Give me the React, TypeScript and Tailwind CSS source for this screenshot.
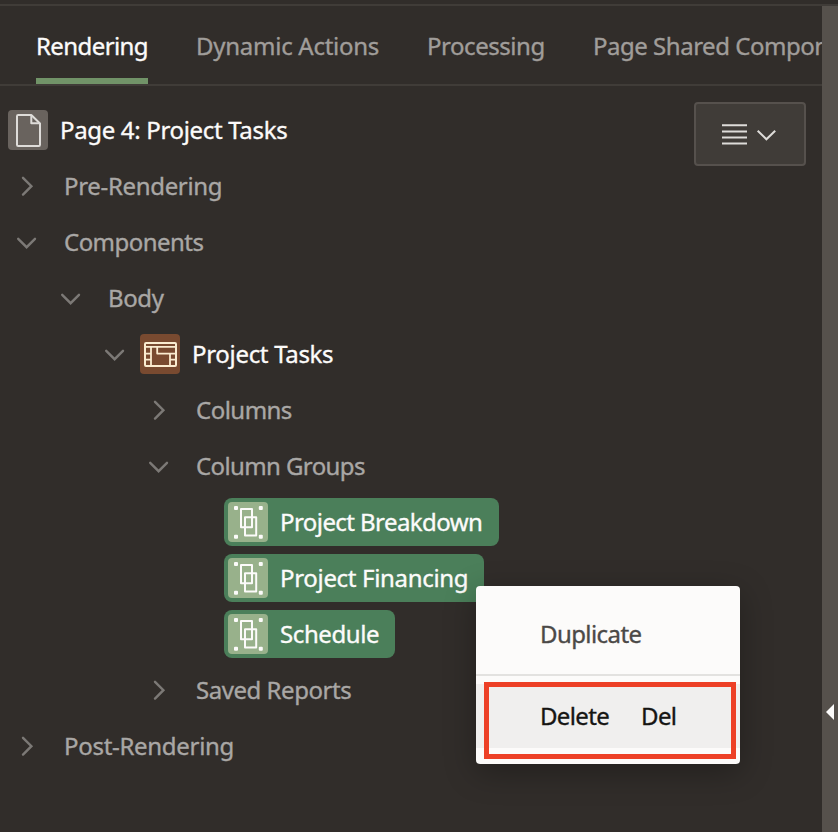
import type { ReactNode } from "react";

function ChevronRight() {
  return (
    <svg className="h-6 w-6 shrink-0" viewBox="0 0 24 24" fill="none" stroke="#7c7976" strokeWidth="2.4" strokeLinecap="round">
      <path d="M8 3.8 L16.4 12.2 L8 20.6" />
    </svg>
  );
}

function ChevronDown() {
  return (
    <svg className="h-6 w-6 shrink-0" viewBox="0 0 24 24" fill="none" stroke="#7c7976" strokeWidth="2.4" strokeLinecap="round">
      <path d="M3.2 8.8 L11.6 17.2 L20 8.8" />
    </svg>
  );
}

function PageIcon() {
  return (
    <svg className="h-10 w-10 shrink-0 rounded bg-[#69635e]" viewBox="0 0 40 40" fill="none" stroke="#dedcd9" strokeWidth="2" strokeLinejoin="round">
      <path d="M10.2 5 H23.3 L32 13.5 V34.8 Q32 36 30.8 36 H10.2 Q9 36 9 34.8 V6.2 Q9 5 10.2 5 Z" />
      <path d="M23.3 5 V13.3 H32" />
    </svg>
  );
}

function GridIcon() {
  return (
    <svg className="h-10 w-10 shrink-0 rounded bg-[#794a30]" viewBox="0 0 40 40" fill="none" stroke="#fbecd0" strokeWidth="2" strokeLinejoin="round">
      <rect x="5" y="9" width="31" height="23" rx="1" />
      <path d="M5 12.8 H36 M11 12.8 V32 M30 19.6 V32 M17.2 12.8 V19.6 H36 M5 19.6 H11 M5 25.7 H11 M30 25.7 H36" strokeWidth="1.8" />
    </svg>
  );
}

function GroupIcon() {
  return (
    <svg className="h-10 w-10 shrink-0 rounded bg-[#98b18b]" viewBox="0 0 40 40" fill="none" stroke="#fcfbfa" strokeWidth="2" strokeLinejoin="round">
      <rect x="13" y="7" width="11" height="18.2" />
      <rect x="17" y="15.2" width="11.2" height="18.4" />
      <g fill="#fcfbfa" stroke="none">
        <rect x="6" y="4" width="4" height="4" rx="1" />
        <rect x="30.8" y="4" width="4" height="4" rx="1" />
        <rect x="6" y="32.7" width="4" height="4" rx="1" />
        <rect x="30.8" y="32.7" width="4" height="4" rx="1" />
      </g>
    </svg>
  );
}

function Branch({ indent, open, label, tracking }: { indent: string; open?: boolean; label: string; tracking: string }) {
  return (
    <div className={`flex h-14 items-center gap-[25px] text-[#a9a7a5] ${indent}`}>
      {open ? <ChevronDown /> : <ChevronRight />}
      <span className={tracking}>{label}</span>
    </div>
  );
}

function Chip({ label, tracking }: { label: string; tracking: string }) {
  return (
    <div className="flex h-14 items-center pl-56">
      <div className="flex h-12 items-center gap-3 rounded-lg bg-[#4b7f5a] pl-1 pr-4 text-[#fcfbfa]">
        <GroupIcon />
        <span className={tracking}>{label}</span>
      </div>
    </div>
  );
}

function Tab({ active, children, className }: { active?: boolean; children: ReactNode; className: string }) {
  return (
    <div
      className={`flex h-[78px] shrink-0 items-center border-b-6 pt-2 ${
        active ? "border-[#719368] text-[#fcfbfa]" : "border-transparent text-[#a09d9a]"
      } ${className}`}
    >
      {children}
    </div>
  );
}

export default function App() {
  return (
    <div className="relative flex h-[832px] w-[838px] flex-col overflow-hidden whitespace-nowrap bg-[#312d2a] font-['Noto_Sans',sans-serif] text-[24px] leading-8 [-webkit-text-stroke:0.35px]">
      <div className="h-1.5 shrink-0 border-b-2 border-[#403c38]" />
      <div className="flex min-h-0 flex-1">
        <main className="flex w-[822px] shrink-0 flex-col">
          <nav className="flex h-20 shrink-0 gap-12 overflow-hidden border-b-2 border-[#403c38] pl-9">
            <Tab active className="w-[112px] tracking-[-0.59px]">Rendering</Tab>
            <Tab className="w-[183px] tracking-[-0.26px]">Dynamic Actions</Tab>
            <Tab className="w-[118px] tracking-[-0.46px]">Processing</Tab>
            <Tab className="tracking-[-0.48px]">Page Shared Components</Tab>
          </nav>
          <div className="flex items-start justify-between pr-4 pt-4">
            <div className="flex flex-col">
              <div className="flex h-14 items-center gap-3 pl-2 text-[#fcfbfa]">
                <PageIcon />
                <span className="tracking-[-0.33px]">Page 4: Project Tasks</span>
              </div>
              <Branch indent="pl-[15px]" label="Pre-Rendering" tracking="tracking-[-0.33px]" />
              <Branch open indent="pl-[15px]" label="Components" tracking="tracking-[-0.54px]" />
              <Branch open indent="pl-[59px]" label="Body" tracking="tracking-[-0.4px]" />
              <div className="flex h-14 items-center pl-[103px] text-[#fcfbfa]">
                <ChevronDown />
                <div className="flex items-center gap-3 pl-[13px]">
                  <GridIcon />
                  <span className="tracking-[-0.31px]">Project Tasks</span>
                </div>
              </div>
              <Branch indent="pl-[147px]" label="Columns" tracking="tracking-[-0.52px]" />
              <Branch open indent="pl-[147px]" label="Column Groups" tracking="tracking-[-0.61px]" />
              <Chip label="Project Breakdown" tracking="w-[203px] tracking-[-0.57px]" />
              <Chip label="Project Financing" tracking="w-[188px] tracking-[-0.32px]" />
              <Chip label="Schedule" tracking="w-[99px] tracking-[-0.4px]" />
              <Branch indent="pl-[147px]" label="Saved Reports" tracking="tracking-[-0.46px]" />
              <Branch indent="pl-[15px]" label="Post-Rendering" tracking="tracking-[-0.3px]" />
            </div>
            <button className="flex h-16 w-28 items-center justify-center rounded border-2 border-[#56514d] bg-[#403c38]">
              <svg className="h-8 w-14" viewBox="0 0 56 32" fill="none" stroke="#dedcd9" strokeWidth="2">
                <path d="M0 7.3 H25 M0 13.4 H25 M0 19.5 H25 M0 25.6 H25" />
                <path d="M35.7 12.7 L44.4 21.3 L53.2 12.7" />
              </svg>
            </button>
          </div>
        </main>
        <aside className="flex flex-1 items-start justify-end bg-[#56514c] pr-1 pt-[698px]">
          <svg className="h-4 w-2" viewBox="0 0 8 16" fill="#fcfbfa">
            <path d="M8 0 V16 L0 8 Z" />
          </svg>
        </aside>
      </div>

      <div className="absolute left-[476px] top-[586px] flex h-[178px] w-[264px] flex-col rounded bg-[#fcfbfa] pt-4 shadow-[0_8px_32px_rgba(0,0,0,0.3)]">
        <div className="flex h-16 items-center pl-16 text-[#4b4947]">
          <span className="tracking-[-0.58px]">Duplicate</span>
        </div>
        <div className="my-2 h-0.5 bg-[#e3e2e0]" />
        <div className="flex h-16 items-center bg-[#f0efee] pl-16 text-[#161513]">
          <span className="w-[101px] tracking-[-0.65px]">Delete</span>
          <span className="tracking-[-0.6px]">Del</span>
        </div>
        <div className="absolute left-2 top-24 h-[77px] w-[252px] border-5 border-[#ed4026]" />
      </div>
    </div>
  );
}
